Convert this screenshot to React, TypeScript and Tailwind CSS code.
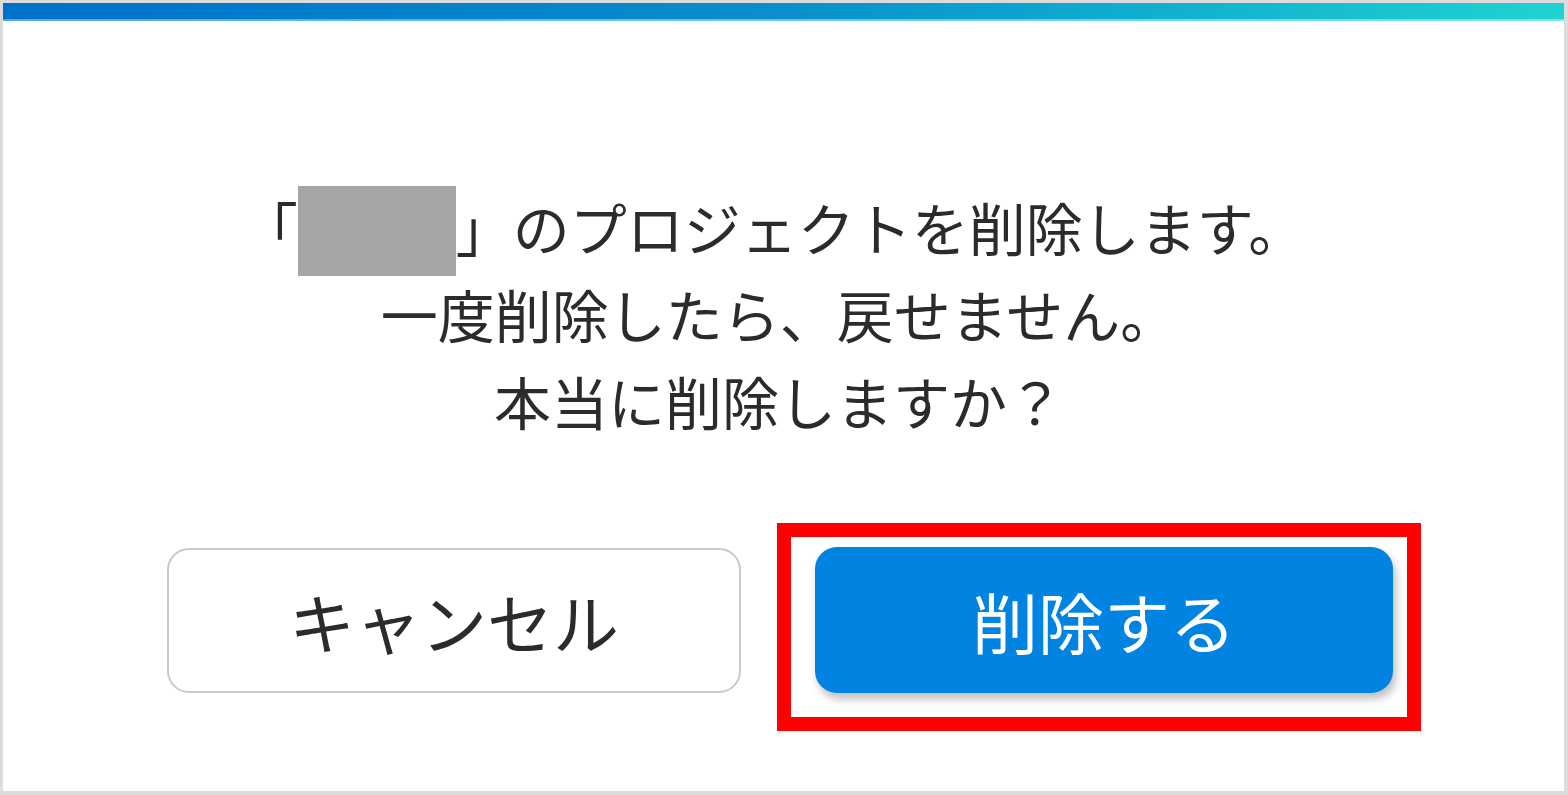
import React from 'react'

const jp = { fontFamily: '"Noto Sans CJK JP", "Noto Sans", sans-serif' }

export default function App() {
	return (
		<div className="relative w-[1568px] h-[795px] bg-white overflow-hidden" style={jp}>
			<div className="flex flex-col w-full h-full border-t-[3px] border-l-[3px] border-r-[4px] border-b-[4px] border-[#dcdcdc]">
				{/* top accent bar */}
				<div className="h-[16px] bg-gradient-to-r from-[#0071c9] via-[#0a8fcc] to-[#20d3d1]" />
				<div className="h-[2px] bg-gradient-to-r from-[#5aa6e0] to-[#7fe4e2]" />

				<div className="flex flex-col items-center pr-[9px] pt-[162px]">
					<div className="text-[57px] leading-[87px] text-[#2b2b2b] text-center">
						<p className="flex items-start justify-center h-[87px] pr-[12px]">
							<span>「</span>
							<span className="inline-block w-[158px] h-[90px] mt-[3px] bg-[#a5a5a5]" />
							<span>」のプロジェクトを削除します。</span>
						</p>
						<p>一度削除したら、戻せません。</p>
						<p>本当に削除しますか？</p>
					</div>

					<div className="flex gap-[74px] mt-[104px] pl-[2px]">
						<button
							type="button"
							className="w-[574px] h-[145px] rounded-[22px] border-2 border-[#c9c9c9] bg-white text-[66px] text-[#2b2b2b]"
						>
							キャンセル
						</button>
						<button
							type="button"
							className="w-[578px] h-[146px] -mt-px rounded-[22px] bg-[#0083e1] text-[66px] text-white shadow-[3px_6px_8px_rgba(0,0,0,0.25)]"
						>
							削除する
						</button>
					</div>
				</div>
			</div>

			{/* annotation highlight */}
			<div className="absolute left-[777px] top-[523px] w-[644px] h-[208px] border-[14px] border-[#ff0000] pointer-events-none" />
		</div>
	)
}
